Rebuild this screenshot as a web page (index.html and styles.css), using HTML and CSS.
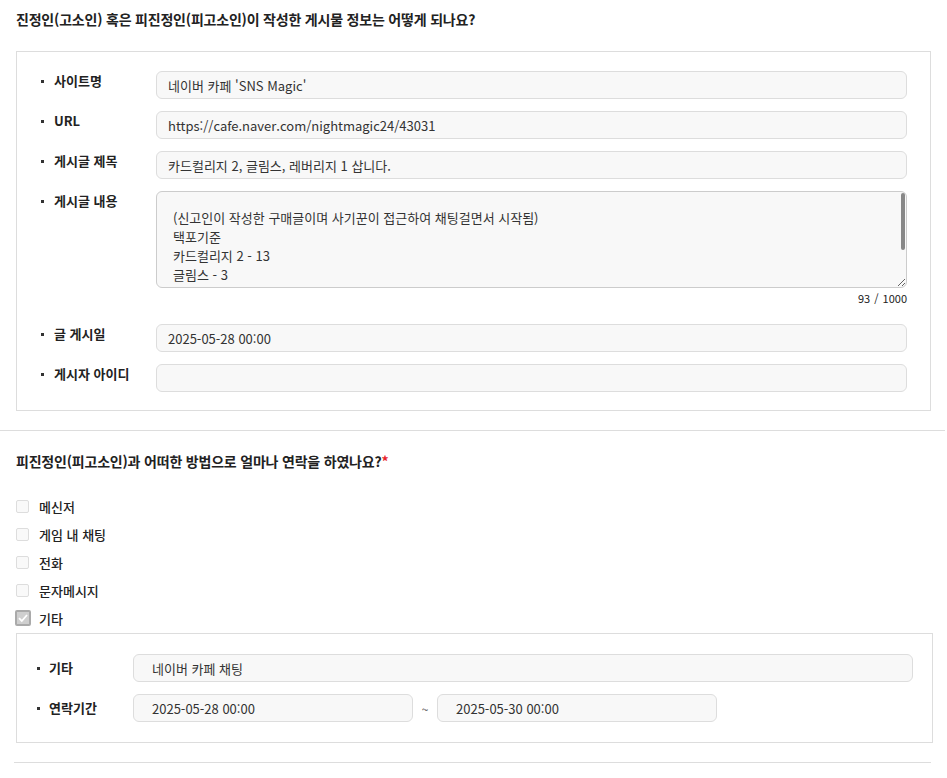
FILE: index.html
```html
<!DOCTYPE html>
<html lang="ko">
<head>
  <meta charset="UTF-8">
  <title>게시물 정보</title>
  <link rel="stylesheet" href="styles.css">
</head>
<body>
  <div class="section section-line">
    <h3 class="q-title">진정인(고소인) 혹은 피진정인(피고소인)이 작성한 게시물 정보는 어떻게 되나요?</h3>
    <div class="box box-post">
      <div class="row">
        <label class="label">사이트명</label>
        <input class="field" type="text" value="네이버 카페 'SNS Magic'" readonly>
      </div>
      <div class="row">
        <label class="label">URL</label>
        <input class="field" type="text" value="https://cafe.naver.com/nightmagic24/43031" readonly>
      </div>
      <div class="row">
        <label class="label">게시글 제목</label>
        <input class="field" type="text" value="카드컬리지 2, 글림스, 레버리지 1 삽니다." readonly>
      </div>
      <div class="row row-area">
        <label class="label">게시글 내용</label>
        <div class="area-wrap">
          <textarea class="area" readonly>(신고인이 작성한 구매글이며 사기꾼이 접근하여 채팅걸면서 시작됨)
택포기준
카드컬리지 2 - 13
글림스 - 3
레버리지 1 - 5
총 21에 삽니다
연락주세요</textarea>
          <span class="thumb"></span>
          <div class="counter">93 / 1000</div>
        </div>
      </div>
      <div class="row">
        <label class="label">글 게시일</label>
        <input class="field" type="text" value="2025-05-28 00:00" readonly>
      </div>
      <div class="row">
        <label class="label">게시자 아이디</label>
        <input class="field" type="text" value="" readonly>
      </div>
    </div>
  </div>

  <div class="section">
    <h3 class="q-title">피진정인(피고소인)과 어떠한 방법으로 얼마나 연락을 하였나요?<span class="req">*</span></h3>
    <ul class="checks">
      <li class="check"><span class="box-ck"></span>메신저</li>
      <li class="check"><span class="box-ck"></span>게임 내 채팅</li>
      <li class="check"><span class="box-ck"></span>전화</li>
      <li class="check"><span class="box-ck"></span>문자메시지</li>
      <li class="check checked">
        <span class="box-ck">
          <svg width="12" height="12" viewBox="0 0 12 12"><path d="M2 6.2 L4.8 9 L10 3" fill="none" stroke="#fff" stroke-width="1.8"/></svg>
        </span>기타
      </li>
    </ul>
    <div class="box box-etc">
      <div class="row">
        <label class="label">기타</label>
        <input class="field" type="text" value="네이버 카페 채팅" readonly>
      </div>
      <div class="row">
        <label class="label">연락기간</label>
        <div class="period">
          <input class="field" type="text" value="2025-05-28 00:00" readonly>
          <span class="tilde">~</span>
          <input class="field" type="text" value="2025-05-30 00:00" readonly>
        </div>
      </div>
    </div>
    <div class="end-line"></div>
  </div>
</body>
</html>
```

FILE: styles.css
```css
/* 기본 */
body {
  margin: 0;
  font-family: "Noto Sans CJK KR", "Noto Sans", sans-serif;
  color: #222;
  background: #fff;
}

.section {
  padding: 9px 14px 0 16px;
}

.section-line {
  padding-bottom: 19px;
  border-bottom: 1px solid #ddd;
  margin-right: 2px;
}

.section + .section {
  padding-top: 20px;
}

/* 질문 제목 */
.q-title {
  margin: 0 0 22px;
  font-size: 14px;
  line-height: 20px;
  font-weight: 700;
  letter-spacing: -0.2px;
}

.section + .section .q-title {
  margin-bottom: 12px;
}

.req {
  color: #e8232a;
}

/* 박스 */
.box {
  border: 1px solid #ddd;
  display: flex;
  flex-direction: column;
  gap: 12px;
}

.box-post {
  padding: 19px 23px 18px 24px;
}

.box-etc {
  padding: 20px 19px 20px 20px;
}

.row {
  display: flex;
  align-items: flex-start;
}

.label {
  position: relative;
  box-sizing: border-box;
  flex: 0 0 115px;
  padding-left: 13px;
  font-size: 13px;
  line-height: 20px;
  font-weight: 700;
  color: #222;
}

.label::before {
  content: "";
  position: absolute;
  left: 0;
  top: 9px;
  width: 3px;
  height: 3px;
  background: #333;
}

.box-etc .row {
  align-items: center;
}

.box-etc .label {
  flex-basis: 96px;
  padding-left: 12px;
}

.field {
  flex: 1;
  min-width: 0;
  height: 28px;
  box-sizing: border-box;
  border: 1px solid #ddd;
  border-radius: 6px;
  background: #f8f8f8;
  padding: 0 11px;
  font-family: inherit;
  font-size: 13px;
  color: #333;
  outline: none;
}

.box-etc .field {
  padding: 0 18px;
}

/* 게시글 내용 */
.area-wrap {
  position: relative;
  flex: 1;
  display: flex;
  flex-direction: column;
}

.area {
  height: 97px;
  box-sizing: border-box;
  border: 1px solid #ccc;
  border-radius: 6px;
  background: #f8f8f8;
  padding: 16px 16px 0;
  font-family: inherit;
  font-size: 13px;
  line-height: 19px;
  color: #333;
  resize: vertical;
  outline: none;
  overflow: hidden;
}

.thumb {
  position: absolute;
  top: 2px;
  right: 2px;
  width: 4px;
  height: 57px;
  border-radius: 2px;
  background: #888;
}

.counter {
  text-align: right;
  font-size: 11px;
  line-height: 18px;
  margin: 1px 0 5px;
  color: #222;
  word-spacing: 1px;
}

/* 체크박스 */
.checks {
  list-style: none;
  margin: 0;
  padding: 13px 0 5px;
  display: flex;
  flex-direction: column;
  gap: 8px;
}

.check {
  display: flex;
  align-items: center;
  height: 20px;
  font-size: 13px;
  font-weight: 500;
  color: #222;
}

.box-ck {
  width: 13px;
  height: 13px;
  box-sizing: border-box;
  border: 1px solid #ddd;
  border-radius: 2px;
  background: #f9f9f9;
  margin-right: 10px;
  display: flex;
  align-items: center;
  justify-content: center;
}

.checked .box-ck {
  width: 16px;
  height: 16px;
  margin-left: -1px;
  margin-right: 8px;
  border: 2px solid #aaa;
  background: #cfcfcf;
}

/* 연락기간 */
.period {
  flex: 1;
  display: flex;
  align-items: center;
}

.period .field {
  flex: 0 0 280px;
}

.tilde {
  width: 24px;
  text-align: center;
  font-size: 12px;
  color: #555;
}

.end-line {
  margin: 19px 2px 0 -2px;
  border-top: 1px solid #ddd;
}
```
